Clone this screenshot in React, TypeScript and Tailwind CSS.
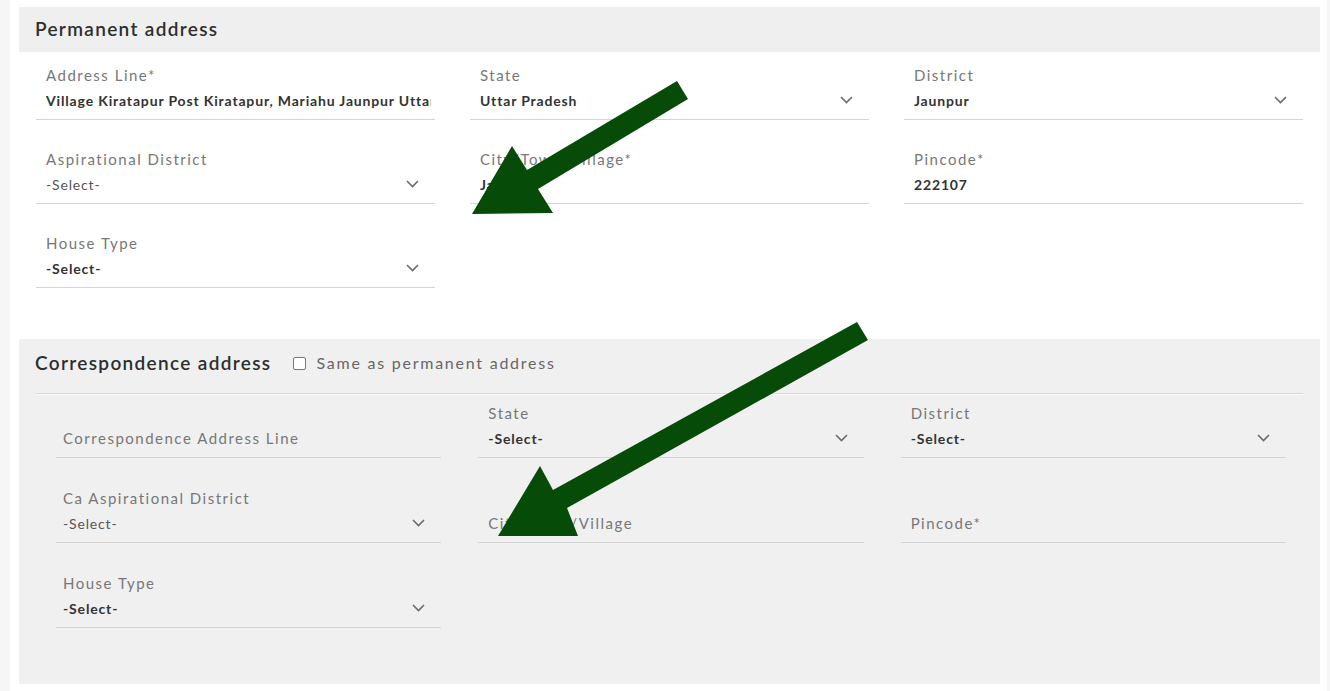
import React from "react";

type Field = {
  label?: string;
  value?: string;
  placeholder?: string;
  select?: boolean;
  muted?: boolean;
};

const permanent: Field[] = [
  { label: "Address Line*", value: "Village Kiratapur Post Kiratapur, Mariahu Jaunpur Uttar Pradesh" },
  { label: "State", value: "Uttar Pradesh", select: true },
  { label: "District", value: "Jaunpur", select: true },
  { label: "Aspirational District", value: "-Select-", select: true, muted: true },
  { label: "City/Town/Village*", value: "Jaunpur" },
  { label: "Pincode*", value: "222107" },
  { label: "House Type", value: "-Select-", select: true },
];

const correspondence: Field[] = [
  { placeholder: "Correspondence Address Line" },
  { label: "State", value: "-Select-", select: true },
  { label: "District", value: "-Select-", select: true },
  { label: "Ca Aspirational District", value: "-Select-", select: true, muted: true },
  { placeholder: "City/Town/Village" },
  { placeholder: "Pincode*" },
  { label: "House Type", value: "-Select-", select: true },
];

function Chevron() {
  return (
    <svg width="13" height="8" viewBox="0 0 13 8" fill="none" className="shrink-0">
      <path d="M1 1l5.5 5.5L12 1" stroke="#6b6b6b" strokeWidth="1.6" />
    </svg>
  );
}

function FormField({ f, pad }: { f: Field; pad: string }) {
  return (
    <div className="border-b border-[#d4d4d4]">
      <div className={`${pad} ${f.select ? "pr-[16px]" : "pr-[4px]"} pb-[9px]`}>
        <div className="h-[18px] leading-[18px] text-[15px] tracking-[0.1em] text-[#777]">
          {f.label ?? ""}
        </div>
        <div className="mt-[6px] h-[20px] flex items-center justify-between gap-3">
          {f.select ? (
            <span
              className={`text-[14px] tracking-[0.06em] ${
                f.muted ? "font-normal text-[#555]" : "font-bold text-[#333]"
              }`}
            >
              {f.value}
            </span>
          ) : (
            <input
              readOnly
              value={f.value ?? ""}
              placeholder={f.placeholder}
              className="w-full min-w-0 bg-transparent outline-none text-[14px] font-bold tracking-[0.06em] text-[#333] placeholder:text-[15px] placeholder:font-normal placeholder:tracking-[0.1em] placeholder:text-[#777]"
            />
          )}
          {f.select && <Chevron />}
        </div>
      </div>
    </div>
  );
}

export default function App() {
  return (
    <div
      className="relative h-[691px] overflow-hidden bg-[#f6f6f6] pl-[10px] pr-[3px]"
      style={{ fontFamily: "Lato, 'Open Sans', sans-serif" }}
    >
      <div className="h-full bg-white pl-[9px] pr-[7px] pt-[7px]">
        {/* permanent address */}
        <div className="h-[45px] bg-[#efefef] px-[16px] flex items-center">
          <h2 className="text-[19px] font-semibold tracking-[0.07em] text-[#2e2e2e]">
            Permanent address
          </h2>
        </div>
        <div className="grid grid-cols-3 gap-x-[35px] gap-y-[30px] px-[17px] pt-[14px] pb-[51px]">
          {permanent.map((f, i) => (
            <FormField key={i} f={f} pad="pl-[10px]" />
          ))}
        </div>

        {/* correspondence address */}
        <div className="h-[345px] bg-[#f0f0f0] pt-[12px]">
          <div className="px-[16px] flex items-center h-[24px]">
            <h2 className="text-[19px] font-semibold tracking-[0.07em] text-[#2e2e2e]">
              Correspondence address
            </h2>
            <label className="ml-[22px] flex items-center gap-[10px] text-[16px] tracking-[0.11em] text-[#666]">
              <span className="h-[13px] w-[13px] rounded-[2px] border border-[#777] bg-white" />
              Same as permanent address
            </label>
          </div>
          <div className="mx-[17px] mt-[18px] border-t border-[#d9d9d9] shadow-[0_1px_0_#fafafa]" />
          <div className="grid grid-cols-3 gap-x-[37px] gap-y-[31px] pl-[37px] pr-[34px] pt-[10px]">
            {correspondence.map((f, i) => (
              <FormField key={i} f={f} pad={i % 3 === 0 ? "pl-[7px]" : "pl-[10px]"} />
            ))}
          </div>
        </div>
      </div>

      {/* pointer arrows */}
      <svg
        className="pointer-events-none absolute inset-0"
        width="1330"
        height="691"
        viewBox="0 0 1330 691"
      >
        <polygon
          points="677,81 527,170 512,146 472,214 553,213 538,189 688,99"
          fill="#064b08"
        />
        <polygon
          points="857,322 553,490 540,466 498,536 578,536 567,508 868,340"
          fill="#064b08"
        />
      </svg>
    </div>
  );
}
